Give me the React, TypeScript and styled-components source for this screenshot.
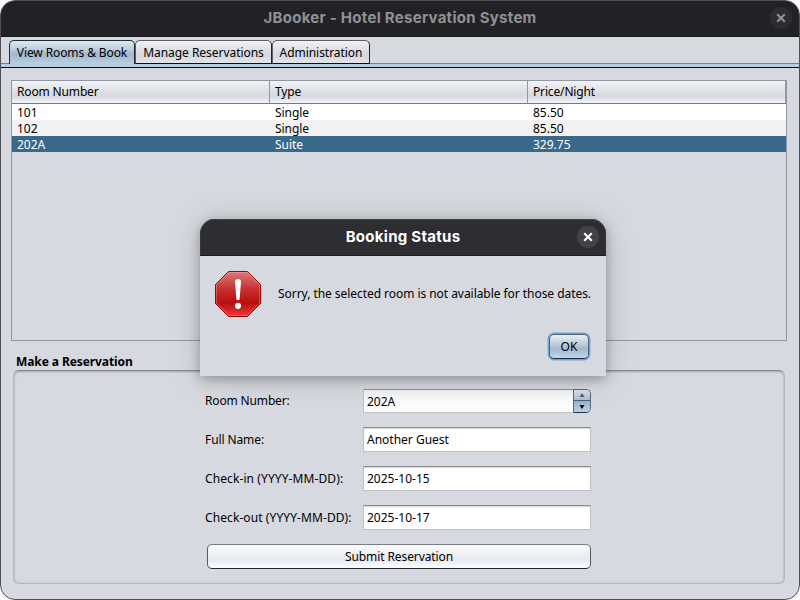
import React from "react";
import styled, { createGlobalStyle } from "styled-components";

const GlobalStyle = createGlobalStyle`
  * { box-sizing: border-box; }
  html, body { margin: 0; padding: 0; background: #fff; overflow: hidden; }
  body { font: 12px/16px "Noto Sans", sans-serif; color: #000; }
`;

const Window = styled.div`
  position: relative;
  width: 800px;
  height: 600px;
  display: flex;
  flex-direction: column;
  background: #d6d9df;
  border: 1px solid #505052;
  border-radius: 15px;
  overflow: hidden;
`;

const TitleBar = styled.header<{ $active?: boolean }>`
  display: grid;
  grid-template-columns: 36px 1fr 36px;
  align-items: center;
  justify-items: center;
  height: 36px;
  flex: none;
  padding-bottom: 2px;
  background: ${(p) => (p.$active ? "#2e2e32" : "#222226")};
  border-bottom: 1px solid ${(p) => (p.$active ? "#1d1d20" : "#161619")};
  color: ${(p) => (p.$active ? "#ffffff" : "#919193")};
`;

const Title = styled.h1`
  grid-column: 2;
  margin: 0;
  font: 700 15px/20px Inter, sans-serif;
  letter-spacing: 0.28px;
  white-space: nowrap;
`;

const CloseButton = styled.button<{ $active?: boolean }>`
  display: flex;
  align-items: center;
  justify-content: center;
  width: 22px;
  height: 22px;
  padding: 0;
  border: 0;
  border-radius: 50%;
  color: inherit;
  background: ${(p) => (p.$active ? "#434347" : "#2d2d31")};
`;

const TabStrip = styled.nav`
  display: flex;
  height: 31px;
  flex: none;
  padding: 3px 8px 0;
  background: linear-gradient(#d6d9df 26px, #76828f 26px 27px, #b8cfe0 27px 30px, #000510 30px);
`;

const Tab = styled.button<{ $selected?: boolean; $width: number }>`
  width: ${(p) => p.$width}px;
  height: 24px;
  padding: ${(p) => (p.$selected ? "0" : "1px 0 0")};
  font: inherit;
  line-height: 22px;
  letter-spacing: ${(p) => (p.$selected ? "-0.1px" : "-0.04px")};
  white-space: nowrap;
  border: 1px solid ${(p) => (p.$selected ? "#1d2e3c" : "#5e6066")};
  border-right-color: #20232b;
  border-bottom: ${(p) => (p.$selected ? "0" : "1px solid #0c0e15")};
  border-radius: 5px 5px 0 0;
  background: ${(p) =>
    p.$selected
      ? "linear-gradient(#e1e8f0 0%, #bdcbda 38%, #a3b8cc 55%, #a9bed2 70%, #b8cfe0 100%)"
      : "linear-gradient(#f0f1f4, #dddfe4 45%, #d5d8de 65%, #e1e4e8)"};
`;

const TabPage = styled.main`
  display: flex;
  flex-direction: column;
  flex: 1;
  padding: 12px 12px 0 10px;
`;

const TableFrame = styled.section`
  height: 261px;
  width: 776px;
  border: 1px solid #9297a1;
`;

const Table = styled.table`
  width: 774px;
  table-layout: fixed;
  border-collapse: separate;
  border-spacing: 0;
`;

const HeadCell = styled.th`
  height: 23px;
  padding: 0 5px 1px;
  text-align: left;
  font-weight: 400;
  line-height: 20px;
  letter-spacing: -0.15px;
  border-right: 1px solid #9297a1;
  border-bottom: 1px solid #74777f;
  background: linear-gradient(#f2f3f6 0, #e2e4e8 40%, #d7dade 60%, #d9dde1 75%, #f2f4fb 100%);
`;

const Row = styled.tr<{ $tone: "plain" | "alternate" | "selected" }>`
  background: ${(p) => ({ plain: "#fff", alternate: "#f2f2f2", selected: "#39698a" })[p.$tone]};
  color: ${(p) => (p.$tone === "selected" ? "#fff" : "#000")};
`;

const Cell = styled.td`
  height: 16px;
  padding: 1px 5px 0;
  line-height: 15px;

  &:nth-child(2) { letter-spacing: -0.05px; }
`;

const GroupTitle = styled.h2`
  margin: 13px 0 0 5px;
  font: 700 12px/16px "Noto Sans", sans-serif;
  letter-spacing: -0.09px;
`;

const Group = styled.section`
  width: 772px;
  height: 214px;
  margin: 0 0 0 2px;
  padding: 17px 0 0 191px;
  border: 1px solid #b4b7bc;
  border-top-color: #888b91;
  border-radius: 6px;
  box-shadow: inset 0 1px 2px #a4a7ac, inset 0 0 2px #bcbfc4;
`;

const Form = styled.form`
  display: flex;
  flex-direction: column;
  gap: 14px;
  width: 386px;
`;

const Field = styled.label`
  display: flex;
  align-items: center;
  justify-content: space-between;
  height: 25px;
`;

const FieldName = styled.span<{ $spacing: number }>`
  white-space: nowrap;
  padding-top: 1px;
  letter-spacing: ${(p) => p.$spacing}px;
`;

const TextBox = styled.input`
  width: 228px;
  height: 25px;
  padding: 0 3px 1px;
  font: inherit;
  color: #000;
  outline: none;
  border: 1px solid #c0c1c4;
  border-top-color: #8d8e92;
  border-radius: 0;
  background: #fff;
  box-shadow: inset 0 1px 1px #d3d4d6;
`;

const Spinner = styled.span`
  display: flex;
  width: 228px;
  height: 24px;
  margin-top: 1px;
`;

const SpinnerText = styled(TextBox)`
  width: 210px;
  height: 24px;
  padding: 1px 3px 0;
  border-right: 0;
  background: linear-gradient(#f0f0f0, #fdfdfd 60%);
  box-shadow: none;
`;

const SpinnerButtons = styled.span`
  display: flex;
  flex-direction: column;
  width: 18px;
  height: 24px;
  border: 1px solid #526b80;
  border-bottom-color: #1c3448;
  border-radius: 0 5px 5px 0;
  overflow: hidden;
`;

const SpinnerButton = styled.button<{ $lower?: boolean }>`
  display: flex;
  align-items: center;
  justify-content: center;
  width: 16px;
  height: ${(p) => (p.$lower ? 12 : 10)}px;
  padding: 0;
  border: 0;
  border-top: ${(p) => (p.$lower ? "1px solid #46647d" : "0")};
  background: ${(p) =>
    p.$lower ? "linear-gradient(#9db2c6, #b8cfe3)" : "linear-gradient(#dce2e9, #adbfd0)"};
`;

const SubmitButton = styled.button`
  width: 384px;
  height: 25px;
  margin-left: 2px;
  padding: 1px 0 0;
  font: inherit;
  letter-spacing: -0.1px;
  color: #000;
  border: 1px solid #555a65;
  border-top-color: #7a7d84;
  border-bottom-color: #242832;
  border-radius: 5px;
  background: linear-gradient(#fafbfc, #eceef2 45%, #e6e9ef 65%, #fcfdff);
`;

const Dialog = styled.section`
  position: absolute;
  left: 199px;
  top: 218px;
  width: 406px;
  height: 157px;
  display: flex;
  flex-direction: column;
  background: #d6d9df;
  border-radius: 15px 15px 0 0;
  box-shadow: 0 3px 12px rgba(0, 0, 0, 0.28), 0 2px 32px rgba(0, 0, 0, 0.14);
`;

const DialogTitleBar = styled(TitleBar)`
  height: 37px;
  padding-bottom: 1px;
  border-radius: 15px 15px 0 0;
  box-shadow: inset 0 1px #434347, inset 1px 0 #37373b, inset -1px 0 #37373b;
`;

const DialogMessage = styled.div`
  display: flex;
  align-items: center;
  gap: 16px;
  padding: 14px 14px 0;
  white-space: nowrap;
  letter-spacing: -0.05px;
`;

const DialogActions = styled.div`
  display: flex;
  justify-content: flex-end;
  padding: 16px 17px 0 0;
`;

const OkButton = styled.button`
  width: 40px;
  height: 25px;
  padding: 1px 0 0;
  font: inherit;
  color: #000;
  border: 1px solid #4a6278;
  border-bottom-color: #172f45;
  border-radius: 5px;
  background: linear-gradient(#e8edf2, #bac8d6 45%, #a3b8cc 60%, #c0d7e9);
  box-shadow: 0 0 0 1.4px #73a4d1;
`;

const StopSign = styled.svg`
  flex: none;
`;

const Cross = () => (
  <svg width="10" height="10" viewBox="0 0 10 10" fill="none" stroke="currentColor" strokeWidth="2">
    <path d="M1.2 1.2 8.8 8.8M8.8 1.2 1.2 8.8" />
  </svg>
);

const Arrow = ({ down }: { down?: boolean }) => (
  <svg width="6" height="4" viewBox="0 0 6 4">
    <path d={down ? "M0.5 0H5.5L3 4Z" : "M0.5 4H5.5L3 0Z"} fill={down ? "#000" : "#555b62"} />
  </svg>
);

const ErrorIcon = () => (
  <StopSign width="48" height="48" viewBox="0 0 48 48">
    <defs>
      <linearGradient id="stop" x1="0" y1="0" x2="0" y2="1">
        <stop offset="0" stopColor="#df7979" />
        <stop offset="0.4" stopColor="#c63030" />
        <stop offset="0.7" stopColor="#b90e0e" />
        <stop offset="1" stopColor="#ee3a3a" />
      </linearGradient>
      <linearGradient id="rim" x1="0" y1="0" x2="0" y2="1">
        <stop offset="0" stopColor="#e69393" />
        <stop offset="0.6" stopColor="#cf4545" />
        <stop offset="1" stopColor="#f06060" />
      </linearGradient>
    </defs>
    <path d="M14.5 1.5H33.5L46.5 14.5V33.5L33.5 46.5H14.5L1.5 33.5V14.5Z" fill="url(#stop)" stroke="#a90000" />
    <path d="M15 2.5H33L45.5 15V33L33 45.5H15L2.5 33V15Z" fill="none" stroke="url(#rim)" />
    <path d="M21 11.5C21 8.3 27 8.3 27 11.5L25.6 29.5Q24 31 22.4 29.5Z" fill="#fff" />
    <circle cx="24" cy="35.8" r="3.1" fill="#fff" />
  </StopSign>
);

const rooms = [
  { number: "101", type: "Single", price: "85.50", tone: "plain" },
  { number: "102", type: "Single", price: "85.50", tone: "alternate" },
  { number: "202A", type: "Suite", price: "329.75", tone: "selected" },
] as const;

const fields = [
  { name: "Full Name:", value: "Another Guest", spacing: -0.1 },
  { name: "Check-in (YYYY-MM-DD):", value: "2025-10-15", spacing: 0.1 },
  { name: "Check-out (YYYY-MM-DD):", value: "2025-10-17", spacing: 0.09 },
];

export default function App() {
  return (
    <>
      <GlobalStyle />
      <Window>
        <TitleBar>
          <Title>JBooker - Hotel Reservation System</Title>
          <CloseButton aria-label="Close window"><Cross /></CloseButton>
        </TitleBar>
        <TabStrip>
          <Tab $selected $width={126}>View Rooms &amp; Book</Tab>
          <Tab $width={137}>Manage Reservations</Tab>
          <Tab $width={98}>Administration</Tab>
        </TabStrip>
        <TabPage>
          <TableFrame>
            <Table>
              <thead>
                <tr>
                  <HeadCell>Room Number</HeadCell>
                  <HeadCell>Type</HeadCell>
                  <HeadCell>Price/Night</HeadCell>
                </tr>
              </thead>
              <tbody>
                {rooms.map((room) => (
                  <Row key={room.number} $tone={room.tone}>
                    <Cell>{room.number}</Cell>
                    <Cell>{room.type}</Cell>
                    <Cell>{room.price}</Cell>
                  </Row>
                ))}
              </tbody>
            </Table>
          </TableFrame>
          <GroupTitle>Make a Reservation</GroupTitle>
          <Group>
            <Form onSubmit={(e) => e.preventDefault()}>
              <Field>
                <FieldName $spacing={-0.15}>Room Number:</FieldName>
                <Spinner>
                  <SpinnerText defaultValue="202A" />
                  <SpinnerButtons>
                    <SpinnerButton type="button" aria-label="Next room"><Arrow /></SpinnerButton>
                    <SpinnerButton type="button" aria-label="Previous room" $lower><Arrow down /></SpinnerButton>
                  </SpinnerButtons>
                </Spinner>
              </Field>
              {fields.map((field) => (
                <Field key={field.name}>
                  <FieldName $spacing={field.spacing}>{field.name}</FieldName>
                  <TextBox defaultValue={field.value} />
                </Field>
              ))}
              <SubmitButton>Submit Reservation</SubmitButton>
            </Form>
          </Group>
        </TabPage>
        <Dialog role="dialog">
          <DialogTitleBar $active>
            <Title>Booking Status</Title>
            <CloseButton $active aria-label="Close dialog"><Cross /></CloseButton>
          </DialogTitleBar>
          <DialogMessage>
            <ErrorIcon />
            <span>Sorry, the selected room is not available for those dates.</span>
          </DialogMessage>
          <DialogActions>
            <OkButton>OK</OkButton>
          </DialogActions>
        </Dialog>
      </Window>
    </>
  );
}
